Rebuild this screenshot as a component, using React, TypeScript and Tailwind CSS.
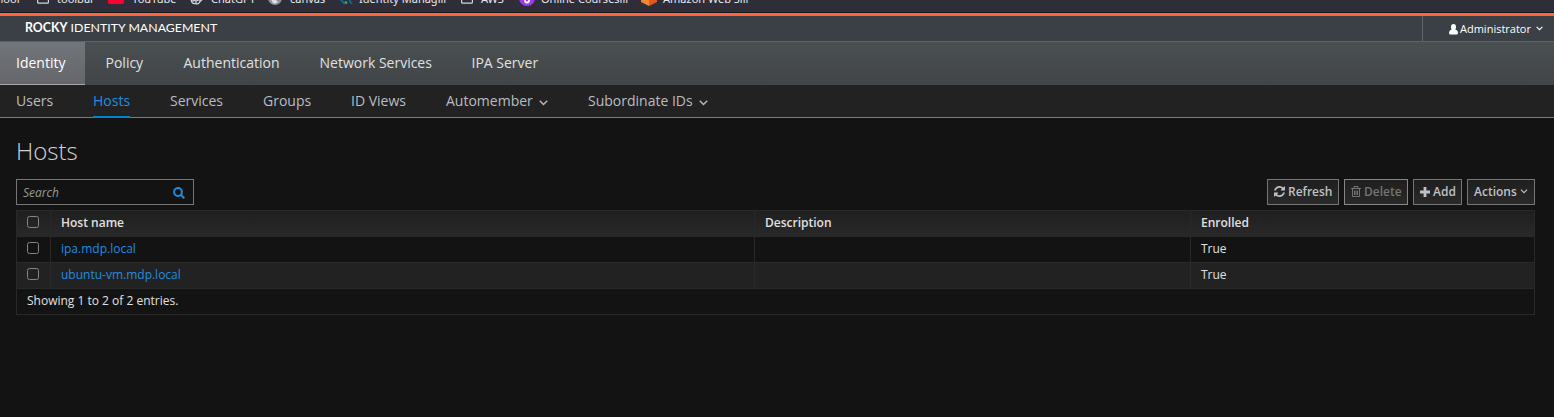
import React from "react";

const Chevron = ({ className }: { className: string }) => (
  <svg viewBox="0 0 9 6" className={className} fill="none" stroke="currentColor" strokeWidth="1.4">
    <path d="M0.8 0.8 4.5 4.5 8.2 0.8" />
  </svg>
);

const FolderIcon = () => (
  <svg viewBox="0 0 12 12" className="h-3 w-3" fill="none" stroke="#d5d5da" strokeWidth="1.2">
    <path d="M.6 1V10.2Q.6 11.2 1.6 11.2H10.4Q11.4 11.2 11.4 10.2V1Z" />
  </svg>
);
const YouTubeIcon = () => (
  <svg viewBox="0 0 16 12" className="h-3 w-4">
    <rect width="16" height="12" rx="2" fill="#ff0033" />
    <path d="M6 2 11 5 6 8Z" fill="#fff" />
  </svg>
);
const ChatIcon = () => (
  <svg viewBox="0 0 14 14" className="h-3.5 w-3.5" fill="none" stroke="#dcdce0" strokeWidth="1.2">
    <path d="M4 1.500Q7 -.5 9.500 2Q13 2.500 12.500 6Q14 9 11 10.500Q9.500 14 6.500 12.500Q2.500 13 2.500 9.500Q0 7 2 4.500Q2 2 4 1.500Z" />
    <path d="M5 4 11 7.500V10.500M9 4 4 7V11M2.500 7.500 7 10.200 12 7.500M7 10.200V12.500" />
  </svg>
);
const GlobeIcon = () => (
  <svg viewBox="0 0 14 14" className="h-3.5 w-3.5">
    <circle cx="7" cy="7" r="7" fill="#8f9296" />
    <path d="M2 5Q5 9 8 9L10 11Q7 13.500 5 12Q3 9 2 5ZM8 1 12 4 9 6Z" fill="#dddfe2" />
  </svg>
);
const IdentityIcon = () => (
  <svg viewBox="0 0 14 14" className="h-3.5 w-3.5" fill="none" strokeWidth="1.8">
    <path d="M1 8 6 13M8 6 13 13" stroke="#126999" />
    <path d="M6 10.500 8 12.500" stroke="#68a442" />
  </svg>
);
const CourseIcon = () => (
  <svg viewBox="0 0 16 16" className="h-4 w-4">
    <circle cx="8" cy="8" r="8" fill="#a435f0" />
    <path d="M6 8V10.500Q6 12.500 8 12.500T10 10.500V8Z" fill="none" stroke="#fff" strokeWidth="1.8" />
  </svg>
);
const AmazonIcon = () => (
  <svg viewBox="0 0 16 16" className="h-4 w-4">
    <path d="M0 4 8 0V16L0 12Z" fill="#f58534" />
    <path d="M16 4 8 0V16L16 12Z" fill="#de5b1b" />
  </svg>
);

const bookmarks = [
  { label: "school", icon: null, box: "-ml-[14px] w-[51px] gap-2" },
  { label: "toolbar", icon: <FolderIcon />, box: "w-[71px] gap-2" },
  { label: "YouTube", icon: <YouTubeIcon />, box: "w-[81px] gap-2" },
  { label: "ChatGPT", icon: <ChatIcon />, box: "w-[79px] gap-2" },
  { label: "canvas", icon: <GlobeIcon />, box: "w-[71px] gap-2" },
  { label: "Identity Managill", icon: <IdentityIcon />, box: "w-[122px] gap-1.5" },
  { label: "AWS", icon: <FolderIcon />, box: "w-[58px] gap-2" },
  { label: "Online Coursesill", icon: <CourseIcon />, box: "w-[122px] gap-1.5" },
  { label: "Amazon Web Sill", icon: <AmazonIcon />, box: "w-[130px] gap-1.5" },
];

const mainTabs = [
  { label: "Policy", box: "w-[78px]" },
  { label: "Authentication", box: "w-[136px]" },
  { label: "Network Services", box: "w-[152px]" },
  { label: "IPA Server", box: "w-[100px]" },
];

const subTabs = [
  { label: "Users", box: "w-[77px]", menu: false },
  { label: "Hosts", box: "w-[77px]", menu: false },
  { label: "Services", box: "w-[93px]", menu: false },
  { label: "Groups", box: "w-[88px]", menu: false },
  { label: "ID Views", box: "w-[95px]", menu: false },
  { label: "Automember", box: "w-[142px]", menu: true },
  { label: "Subordinate IDs", box: "w-[160px]", menu: true },
];

const RefreshIcon = () => (
  <svg viewBox="0 0 1536 1536" className="h-[11px] w-[11px] shrink-0" fill="currentColor">
    <path d="M1511 928q0 5-1 7-64 268-268 434.500T764 1536q-146 0-282.500-55T238 1324l-129 129q-19 19-45 19t-45-19-19-45V960q0-26 19-45t45-19h448q26 0 45 19t19 45-19 45l-137 137q71 66 161 102t187 36q134 0 250-65t186-179q11-17 53-117 8-23 30-23h192q13 0 22.500 9.500t9.500 22.500zM1536 128v448q0 26-19 45t-45 19h-448q-26 0-45-19t-19-45 19-45l138-138Q969 256 768 256q-134 0-250 65T332 500q-11 17-53 117-8 23-30 23H50q-13 0-22.500-9.500T18 608v-7q65-268 270-434.500T768 0q146 0 284 55.500T1297 212l130-129q19-19 45-19t45 19 19 45z" />
  </svg>
);
const TrashIcon = () => (
  <svg viewBox="0 0 10 11" className="h-[11px] w-[10px] shrink-0" fill="none" stroke="currentColor">
    <path d="M0 2.5H10M3 2V.5H7V2M1.5 3V10.5H8.500V3M3.500 4.500V9M5 4.500V9M6.500 4.500V9" />
  </svg>
);
const PlusIcon = () => (
  <svg viewBox="0 0 10 10" className="h-[10px] w-[10px] shrink-0" fill="currentColor">
    <path d="M3.600 0H6.400V3.600H10V6.400H6.400V10H3.600V6.400H0V3.600H3.600Z" />
  </svg>
);

const buttonBase =
  "flex h-[26px] items-center border pb-px text-[12px] leading-none font-semibold bg-linear-to-b from-[#1f1f1f] to-[#292929]";

const Check = () => (
  <input type="checkbox" className="mb-[2px] block h-3 w-3 appearance-none rounded-[2.5px] border border-[#858585] bg-transparent" />
);

const rowGrid = "grid grid-cols-[34px_704px_436px_1fr]";
const cell = "flex items-center border-l border-[#292929] pb-[2px] pl-[10px]";

export default function App() {
  return (
    <div className="flex h-[417px] w-[1554px] flex-col overflow-hidden bg-[#131313] font-['Open_Sans',sans-serif] text-[#d1d1d1]">
      <div className="flex h-[13px] shrink-0 overflow-hidden border-b border-[#1b1a20] bg-[#2f2e38] font-['Noto_Sans',sans-serif] text-[11px] text-[#e8e8ec]">
        {bookmarks.map((b) => (
          <div key={b.label} className={`-mt-[10px] flex h-4 shrink-0 items-center whitespace-nowrap ${b.box}`}>
            {b.icon}
            <span className="pt-[2px]">{b.label}</span>
          </div>
        ))}
      </div>
      <header className="flex h-[29px] shrink-0 justify-between border-t-3 border-b border-t-[#ff6337] border-b-[#5e6266] bg-[#3b3f46]">
        <div className="flex items-center pb-px pl-[25px] font-['Lato',sans-serif] text-[12.35px] leading-none text-white">
          <span className="whitespace-pre"><b>ROCKY</b> IDENTITY MANAGEMENT</span>
        </div>
        <button className="flex w-[132px] items-center border-l border-[#64676b] pt-[2px] pl-[26px] text-[11px] text-white">
          <svg viewBox="0 0 9 11" className="mr-[2px] h-[11px] w-[9px]" fill="currentColor">
            <path d="M2 3A2.500 3 0 0 1 7 3Q7 4.500 6.300 5.500Q9 6 9 9Q9 10.500 7.500 10.500H1.500Q0 10.500 0 9Q0 6 2.700 5.500Q2 4.500 2 3Z" />
          </svg>
          <span>Administrator</span>
          <Chevron className="mb-[2px] ml-[5px] h-[5px] w-[7px]" />
        </button>
      </header>
      <nav className="flex h-[43px] shrink-0 bg-linear-to-b from-[#4a4f52] to-[#414548] text-[14px] text-[#e0e0e0]">
        <a className="mr-5 flex w-[85px] items-center border-b border-[#a5a6a9] bg-linear-to-b from-[#72757b] to-[#64666b] pb-px pl-4 text-white">Identity</a>
        {mainTabs.map((t) => (
          <a key={t.label} className={`flex items-center pb-[2px] pl-[0.5px] whitespace-nowrap ${t.box}`}>{t.label}</a>
        ))}
      </nav>
      <nav className="flex h-[33px] shrink-0 border-b border-[#7b7b7b] bg-[#222222] pl-4 text-[14px] text-[#b9bdc3]">
        {subTabs.map((t) => (
          <div key={t.label} className={`h-[33px] shrink-0 ${t.box}`}>
            <a className={t.label === "Hosts" ? "inline-flex h-[33px] items-center border-b-2 border-[#0088ce] text-[#208de0]" : "inline-flex h-[33px] items-center whitespace-nowrap border-b-2 border-transparent"}>
              {t.label}
              {t.menu && <Chevron className="mt-[4px] ml-[6px] h-[6px] w-[9px]" />}
            </a>
          </div>
        ))}
      </nav>
      <main className="flex flex-col pr-[19px] pl-4">
        <h1 className="mt-[16px] h-[34px] text-[24px] leading-[34px] font-light">Hosts</h1>
        <div className="mt-[11px] flex h-[26px] justify-between">
          <div className="flex w-[178px] items-center justify-between border border-[#767676] pt-px pr-2 pl-[6px] text-[12px] text-[#999999] italic">
            <span className="pt-px">Search</span>
            <svg viewBox="0 0 12 12" className="h-3 w-3" fill="none" stroke="#208de0" strokeWidth="2">
              <circle cx="5" cy="5" r="3.900" />
              <path d="M8 8 11.300 11.300" />
            </svg>
          </div>
          <div className="flex gap-[5px] text-[#bec0c6]">
            <button className={`${buttonBase} w-[72px] gap-[3px] border-[#767676] pl-[6px]`}><RefreshIcon />Refresh</button>
            <button className={`${buttonBase} w-[64px] gap-[3px] border-[#858585] pl-[6px] text-[#737373]`}><TrashIcon />Delete</button>
            <button className={`${buttonBase} w-[49px] gap-[3px] border-[#767676] pl-[6px]`}><PlusIcon />Add</button>
            <button className={`${buttonBase} w-[68px] gap-[3px] border-[#767676] pl-[6px]`}>Actions<Chevron className="h-[5px] w-[8px] shrink-0" /></button>
          </div>
        </div>
        <section className="mt-[5px] border border-l-0 border-[#292929] text-[12px] text-[#e0e0e0]">
          <div className={`${rowGrid} h-[26px] border-b border-[#292929] bg-linear-to-b from-[#1f1f1f] to-[#292929] font-semibold`}>
            <div className={cell}><Check /></div>
            <div className={cell}>Host name</div>
            <div className={cell}>Description</div>
            <div className={cell}>Enrolled</div>
          </div>
          {["ipa.mdp.local", "ubuntu-vm.mdp.local"].map((host, i) => (
            <div key={host} className={`${rowGrid} h-[26px] border-b border-[#292929] ${i ? "bg-[#222222]" : ""}`}>
              <div className={cell}><Check /></div>
              <div className={`${cell} text-[#208de0]`}>{host}</div>
              <div className={cell} />
              <div className={cell}>True</div>
            </div>
          ))}
          <div className={`${cell} h-[25px]`}>Showing 1 to 2 of 2 entries.</div>
        </section>
      </main>
    </div>
  );
}
